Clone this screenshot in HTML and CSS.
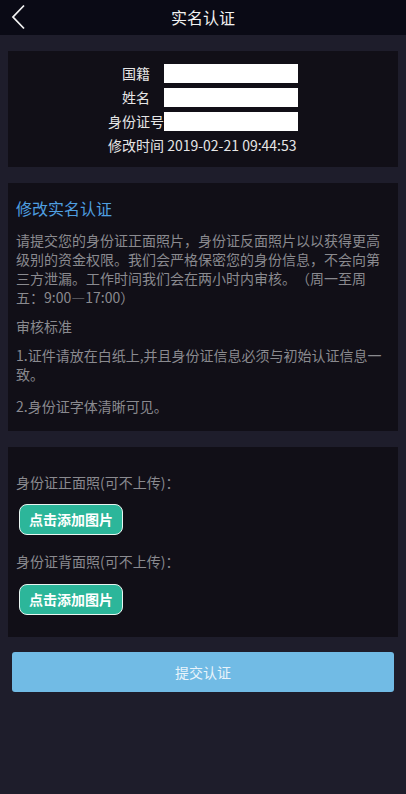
FILE: index.html
```html
<!DOCTYPE html>
<html lang="zh-CN">
<head>
    <meta charset="UTF-8">
    <meta name="viewport" content="width=device-width, initial-scale=1.0">
    <title>实名认证</title>
    <link rel="stylesheet" href="styles.css">
</head>
<body>
    <header class="top-bar">
        <a class="back-btn" href="#">
            <svg width="16" height="28" viewBox="0 0 16 28">
                <path d="M13 2.5 L2 14 L13 25.5" fill="none" stroke="#f2f2f2" stroke-width="1.8"/>
            </svg>
        </a>
        <h1>实名认证</h1>
    </header>

    <main class="page">
        <section class="card info-card">
            <div class="info-row">
                <span class="info-label">国籍</span>
                <input type="text" class="info-input">
            </div>
            <div class="info-row">
                <span class="info-label">姓名</span>
                <input type="text" class="info-input">
            </div>
            <div class="info-row">
                <span class="info-label">身份证号</span>
                <input type="text" class="info-input">
            </div>
            <div class="info-time">修改时间 2019-02-21 09:44:53</div>
        </section>

        <section class="card notice-card">
            <h2>修改实名认证</h2>
            <p class="notice-text">请提交您的身份证正面照片，身份证反面照片以以获得更高级别的资金权限。我们会严格保密您的身份信息，不会向第三方泄漏。工作时间我们会在两小时内审核。（周一至周五：9:00—17:00）</p>
            <p class="notice-sub">审核标准</p>
            <p class="notice-rule">1.证件请放在白纸上,并且身份证信息必须与初始认证信息一致。</p>
            <p class="notice-rule last">2.身份证字体清晰可见。</p>
        </section>

        <section class="card upload-card">
            <p class="upload-label">身份证正面照(可不上传)：</p>
            <button type="button" class="upload-btn">点击添加图片</button>
            <p class="upload-label second">身份证背面照(可不上传)：</p>
            <button type="button" class="upload-btn">点击添加图片</button>
        </section>

        <button type="button" class="submit-btn">提交认证</button>
    </main>
</body>
</html>
```

FILE: styles.css
```css
body {
    margin: 0;
    padding: 0;
    background-color: #1e1d2b;
    font-family: "Noto Sans CJK SC", "Noto Sans", sans-serif;
    font-size: 14px;
    color: #e6e6e6;
    text-spacing-trim: space-all;
}
.top-bar {
    height: 35px;
    background-color: #0a0a15;
    display: flex;
    align-items: center;
    justify-content: center;
    position: relative;
}
.top-bar h1 {
    margin: 0;
    font-size: 16px;
    font-weight: normal;
    line-height: 35px;
    color: #f2f2f2;
}
.back-btn {
    position: absolute;
    left: 11px;
    top: 3px;
    display: block;
}
.page {
    padding: 16px 8px 40px;
}
.card {
    background-color: #110f17;
    margin-bottom: 16px;
}
.info-card {
    padding: 13px 0 12px;
    display: flex;
    flex-direction: column;
    align-items: center;
    gap: 5px;
}
.info-row {
    display: flex;
    width: 190px;
    height: 19px;
}
.info-label {
    flex-shrink: 0;
    width: 42px;
    padding-right: 14px;
    text-align: right;
    line-height: 19px;
    white-space: nowrap;
}
.info-input {
    width: 134px;
    height: 19px;
    border: none;
    padding: 0;
    margin: 0;
    background-color: #fff;
    box-sizing: border-box;
}
.info-time {
    line-height: 19px;
    width: 190px;
    white-space: nowrap;
}
.notice-card {
    padding: 14px 8px 15px;
}
.notice-card h2 {
    margin: 0 0 12px;
    font-size: 16px;
    font-weight: normal;
    line-height: 22px;
    color: #4f9fe0;
}
.notice-card p {
    margin: 0 0 10px;
    line-height: 19px;
    color: #8a8a8f;
}
.notice-card p.notice-rule {
    margin-bottom: 13px;
}
.notice-card p.last {
    margin-bottom: 0;
}
.upload-card {
    padding: 26px 8px 22px;
}
.upload-label {
    margin: 0 0 12px;
    line-height: 19px;
    color: #8a8a8f;
}
.upload-label.second {
    margin-top: 17px;
    margin-bottom: 13px;
}
.upload-btn {
    display: block;
    margin-left: 3px;
    height: 31px;
    padding: 0 9px;
    border: 1px solid #e8f5f1;
    border-radius: 8px;
    background-color: #2cb69a;
    color: #fff;
    font-family: "Noto Sans CJK SC", sans-serif;
    font-size: 14px;
    font-weight: bold;
    line-height: 29px;
}
.submit-btn {
    display: block;
    width: calc(100% - 8px);
    margin: -1px 4px 0;
    height: 40px;
    border: none;
    border-radius: 3px;
    background-color: #71bbe5;
    color: #e9f4fb;
    font-family: "Noto Sans CJK SC", sans-serif;
    font-size: 14px;
}
```
